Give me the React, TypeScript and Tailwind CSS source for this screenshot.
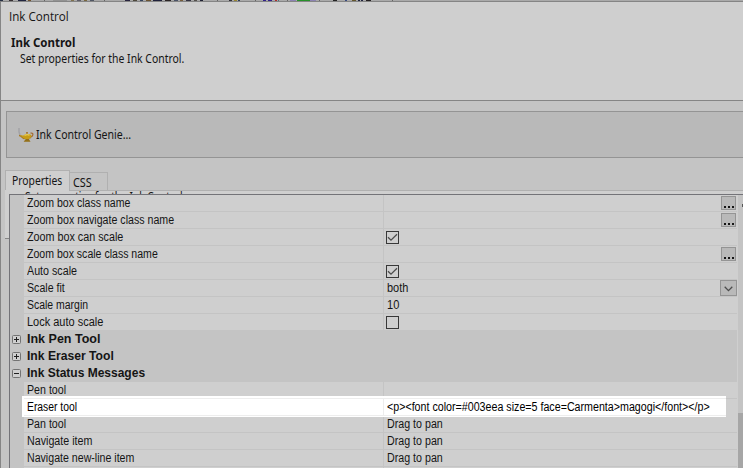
import React from "react";

type TextProps = { w: number; size?: number; bold?: boolean; font?: string; color?: string; children: string };

function T({ w, size = 12, bold = false, font = "Liberation Sans", color = "#151515", children }: TextProps) {
  const ref = React.useRef<HTMLSpanElement>(null);
  const [scale, setScale] = React.useState(1);
  React.useLayoutEffect(() => {
    const el = ref.current;
    if (el && el.offsetWidth) setScale(w / el.offsetWidth);
  }, [w, children]);
  return (
    <span
      ref={ref}
      className={`inline-block origin-left whitespace-pre ${bold ? "font-bold" : ""}`}
      style={{ fontFamily: `"${font}", sans-serif`, fontSize: size, color, transform: `scaleX(${scale})` }}
    >
      {children}
    </span>
  );
}

function Dots() {
  return (
    <div className="mt-px mr-px flex h-[14px] w-[15px] items-end justify-center gap-[2px] border border-[#949494] bg-[#b9b9b9] pb-px">
      <i className="size-[2px] bg-[#151515]" />
      <i className="size-[2px] bg-[#151515]" />
      <i className="size-[2px] bg-[#151515]" />
    </div>
  );
}

function Check({ on }: { on?: boolean }) {
  return (
    <svg className="mt-[2px] ml-[2px] block" width="13" height="13" viewBox="0 0 13 13" fill="none">
      <rect x=".5" y=".5" width="12" height="12" stroke="#383838" />
      {on && <path d="M2 6.2 5 9.2 11 3.3" stroke="#4c4c4c" strokeWidth="1.3" />}
    </svg>
  );
}

type Item = { label: string; w: number; kind?: "dots" | "on" | "off" | "select"; value?: string; vw?: number; lit?: boolean };

function Row({ item }: { item: Item }) {
  const { label, w, kind, value, vw, lit } = item;
  const line = lit ? "border-[#ededed]" : "border-[#c4c4c4]";
  const ink = lit ? "#000000" : "#151515";
  return (
    <div className="relative flex h-[17px] leading-[17px]">
      <div className="w-[14px] shrink-0 bg-[#c4c4c4]" />
      {lit && (
        <div className="absolute -top-[3px] left-3 z-10 h-[21px] w-[704px] bg-white">
          <div className="mt-[2px] ml-[2px] h-px bg-[#ededed]" />
        </div>
      )}
      <div className={`relative flex w-[360px] shrink-0 border-r border-b pl-[3px] ${line} ${lit ? "z-10" : ""}`}>
        <T w={w} color={ink}>{label}</T>
      </div>
      <div className={`relative flex h-[17px] justify-between border-b ${line} ${lit ? "z-10 w-[342px]" : "flex-1"}`}>
        {value && <div className="flex w-0 pl-[3px]"><T w={vw!} color={ink}>{value}</T></div>}
        {(kind === "on" || kind === "off") && <Check on={kind === "on"} />}
        {kind === "dots" && <div className="ml-auto"><Dots /></div>}
        {kind === "select" && (
          <div className="ml-auto flex h-4 w-[17px] items-center justify-center border border-[#949494] bg-[#b9b9b9]">
            <svg className="mt-[2px]" width="9" height="6" viewBox="0 0 9 6" fill="none">
              <path d="M.7.8 4.5 4.6 8.3.8" stroke="#4c4c4c" strokeWidth="1.3" />
            </svg>
          </div>
        )}
      </div>
    </div>
  );
}

function Category({ label, w, open }: { label: string; w: number; open?: boolean }) {
  return (
    <div className="flex h-[17px] bg-[#c4c4c4] leading-[17px]">
      <svg className="mt-1 ml-[2px] mr-[6px]" width="9" height="9" viewBox="0 0 9 9" fill="none">
        <rect x=".5" y=".5" width="8" height="8" rx="1" fill="#cfcfcf" stroke="#737373" />
        <path d={open ? "M2 4.5h5" : "M2 4.5h5M4.5 2v5"} stroke="#202020" />
      </svg>
      <T w={w} bold>{label}</T>
    </div>
  );
}

function Lamp() {
  return (
    <svg className="mr-[2px] ml-[11px] block" width="16" height="16" viewBox="0 0 16 16" fill="none">
      <path d="M1 1v4l1 3" stroke="#a2a2a6" strokeWidth="1.5" />
      <path d="M1 8.5c2 0 2.5 1.5 5 3l7-1" stroke="#a87b22" strokeWidth="1.5" />
      <path d="M12.5 6.2c3-.8 3.4 2.4.2 4" stroke="#a66b32" strokeWidth="1.2" />
      <path d="M2 8c2 .2 3 1 4 .2 1-1.6 6-1.8 7.3 0 .5 2-2 4-4.4 4-2.5 0-4-1.8-6.9-4.2Z" fill="#c79c16" />
      <path d="M6.5 8.5c1.5-1 3.3-1.2 5-.4" stroke="#e6cc55" strokeWidth="1.3" />
      <path d="M8.2 6.8V5h1.6v1.8" fill="#a06d20" />
      <path d="M7.8 12h3l1.7 2.7H5.6Z" fill="#947018" />
    </svg>
  );
}

const scaleRows: Item[] = [
  { label: "Zoom box class name", w: 103, kind: "dots" },
  { label: "Zoom box navigate class name", w: 147, kind: "dots" },
  { label: "Zoom box can scale", w: 96, kind: "on" },
  { label: "Zoom box scale class name", w: 131, kind: "dots" },
  { label: "Auto scale", w: 50, kind: "on" },
  { label: "Scale fit", w: 38, kind: "select", value: "both", vw: 21 },
  { label: "Scale margin", w: 61, value: "10", vw: 12 },
  { label: "Lock auto scale", w: 76, kind: "off" },
];

const messageRows: Item[] = [
  { label: "Pen tool", w: 39 },
  { label: "Eraser tool", w: 50, value: "<p><font color=#003eea size=5 face=Carmenta>magogi</font></p>", vw: 323, lit: true },
  { label: "Pan tool", w: 39, value: "Drag to pan", vw: 56 },
  { label: "Navigate item", w: 65, value: "Drag to pan", vw: 56 },
  { label: "Navigate new-line item", w: 107, value: "Drag to pan", vw: 56 },
  { label: "", w: 0 },
];

const toolbarMarks: [number, number, string][] = [
  [0, 3, "#263044"], [9, 4, "#373033"], [18, 8, "#20243f"], [28, 3, "#6f512d"], [44, 1, "#666"],
  [53, 14, "#929292"], [71, 3, "#80714e"], [77, 4, "#5f5d68"], [84, 3, "#79683e"], [90, 4, "#505765"],
  [104, 1, "#666"], [125, 5, "#29243f"], [133, 4, "#4e493c"], [140, 3, "#35435c"], [146, 5, "#6a5331"],
  [153, 9, "#20223b"], [165, 6, "#2b2525"], [174, 4, "#4a5367"], [180, 3, "#765d3b"], [186, 5, "#353342"],
  [194, 3, "#54514c"], [200, 3, "#202234"], [217, 1, "#666"], [229, 3, "#33313a"], [234, 3, "#9a8730"], [238, 2, "#33405a"],
  [255, 1, "#666"], [263, 3, "#32218b"], [268, 4, "#32218b"], [275, 2, "#b02c2c"], [278, 1, "#4a6f79"],
  [287, 1, "#666"], [290, 6, "#8b82b2"], [297, 13, "#26912a"], [310, 6, "#8b82b2"], [319, 1, "#666"],
  [333, 4, "#252525"], [345, 2, "#384a80"], [352, 4, "#66582d"], [358, 2, "#20243f"], [361, 2, "#20243f"], [366, 5, "#242022"], [392, 1, "#666"],
];

export default function App() {
  return (
    <div className="flex h-[468px] w-[743px] flex-col overflow-hidden bg-[#c4c4c4] text-[#151515]">
      <svg className="block h-px w-[743px] shrink-0 bg-[#aaa]" width="743" height="1" shapeRendering="crispEdges">
        {toolbarMarks.map(([x, w, c]) => <rect key={x} x={x} width={w} height="1" fill={c} />)}
      </svg>
      <div className="flex min-h-0 flex-1 flex-col border-t border-l border-[#858585]">
        <header className="h-[99px] shrink-0 border-b border-[#858585] bg-[#cfcfcf]">
          <div className="ml-2 flex h-[27px] pt-[6px] leading-[18px]"><T w={60} font="Open Sans">Ink Control</T></div>
          <div className="ml-[10px] flex h-[19px] pt-[4px] leading-[20px]"><T w={64} font="Noto Sans" bold>Ink Control</T></div>
          <div className="ml-[19px] flex pt-[3px] leading-4"><T w={164} font="Noto Sans">Set properties for the Ink Control.</T></div>
        </header>
        <section className="mt-[10px] ml-[5px] flex h-[47px] w-[740px] shrink-0 items-center border border-[#949494] bg-[#b9b9b9]">
          <div className="mt-px"><Lamp /></div>
          <div className="mt-px flex"><T w={95} font="Noto Sans">Ink Control Genie...</T></div>
        </section>
        <nav className="mt-3 ml-1 flex h-5 shrink-0 items-end">
          <div className="flex h-5 w-[65px] border border-b-0 border-[#b0b0b0] bg-[#cfcfcf] pl-[6px] leading-[20px]">
            <T w={50} font="Noto Sans">Properties</T>
          </div>
          <div className="flex h-[18px] w-[38px] border-t border-r border-[#b0b0b0] pl-[3px] leading-[19px]">
            <T w={19} font="Noto Sans">CSS</T>
          </div>
        </nav>
        <div className="flex min-h-0 flex-1">
          <div className="ml-1 w-1 shrink-0">
            <div className="h-[49px] border-b border-[#858585] bg-[#cfcfcf]" />
          </div>
          <div className="flex min-w-0 flex-1 flex-col">
            <div className="flex h-[4px] shrink-0 flex-col overflow-hidden bg-[#cfcfcf]">
              <div className="ml-[60px] h-px shrink-0 bg-[#b0b0b0]" />
              <div className="-mt-[2px] ml-4 flex h-4 shrink-0 leading-4"><T w={160} font="Noto Sans">Set properties for the Ink Control.</T></div>
            </div>
            <div className="flex min-h-0 flex-1 border-t border-l border-[#737378] bg-[#cfcfcf]">
              <main className="w-[727px] shrink-0">
                {scaleRows.map((r) => <Row key={r.label} item={r} />)}
                <Category label="Ink Pen Tool" w={73} />
                <Category label="Ink Eraser Tool" w={87} />
                <Category label="Ink Status Messages" w={118} open />
                {messageRows.map((r) => <Row key={r.label} item={r} />)}
              </main>
              <aside className="ml-px flex flex-1 flex-col bg-[#c4c4c4]">
                <div className="mt-[9px] ml-auto h-[3px] w-px bg-[#555]" />
                <div className="mt-auto h-[55px] bg-[#a6a6a6]" />
              </aside>
            </div>
          </div>
        </div>
      </div>
    </div>
  );
}
